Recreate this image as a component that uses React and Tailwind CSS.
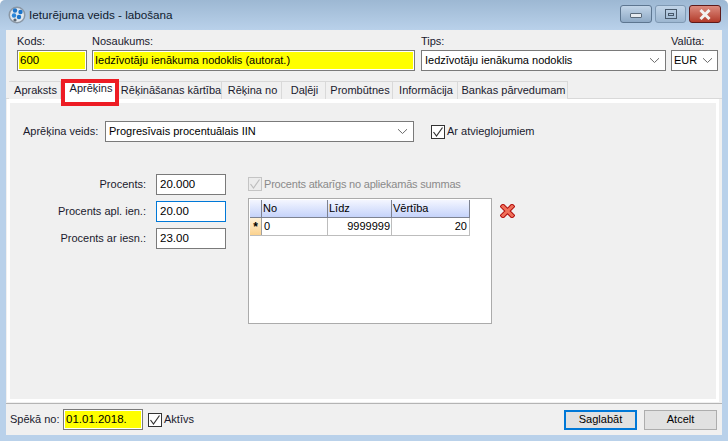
const F = "[font-family:'Liberation_Sans',sans-serif]";

function Chevron() {
  return (
    <svg width="11" height="7" viewBox="0 0 11 7" className="shrink-0">
      <path d="M1 1.2 L5.5 5.5 L10 1.2" fill="none" stroke="#6b6b6b" strokeWidth="1" />
    </svg>
  );
}

function Check({ disabled }) {
  const c = disabled ? "#bdbdbd" : "#333333";
  return (
    <span className={`flex w-[14px] h-[14px] shrink-0 items-center justify-center border ${disabled ? "border-[#c4c4c4] bg-[#ececec]" : "border-[#333333] bg-white"}`}>
      <svg width="12" height="12" viewBox="0 0 12 12">
        <path d="M1.5 6 L4.5 10 L10.5 1.5" fill="none" stroke={c} strokeWidth="1.2" />
      </svg>
    </span>
  );
}

function Input({ value, focus }) {
  return (
    <div className={`w-[70px] h-[21px] shrink-0 bg-white border pl-[3px] text-[11.5px] leading-[19px] text-black ${focus ? "border-[#0078d7]" : "border-[#7a7a7a]"}`}>{value}</div>
  );
}

function PctRow({ label, value, focus }) {
  return (
    <div className="flex items-center justify-end gap-[10px]">
      <span className="text-[11px] text-[#1a1a2e] whitespace-nowrap">{label}</span>
      <Input value={value} focus={focus} />
    </div>
  );
}

function Tab({ children, active, w }) {
  return (
    <div
      className={`flex items-center justify-center shrink-0 whitespace-nowrap border-r border-[#d9d9d9] text-[11px] text-[#1a1a2e] ${active ? "bg-white h-[21px] -mt-[2px] pb-[3px] pl-[3px]" : "bg-[#f0f0f0] h-[18px] border-t pl-[2px]"} ${w}`}
    >
      {children}
    </div>
  );
}

function WinBtn({ w, children, className }) {
  return (
    <div className={`flex h-[18px] ${w} items-center justify-center rounded-[3px] border ${className}`}>{children}</div>
  );
}

function Label({ children }) {
  return <div className="text-[11px] leading-[14px] mt-[4px] mb-[2px] text-[#1a1a2e] whitespace-nowrap">{children}</div>;
}

export default function App() {
  return (
    <div className={`relative w-[728px] h-[441px] overflow-hidden rounded-t-[5px] flex flex-col bg-[#b9d1ea] bg-gradient-to-b from-[#9db8d3] to-[#b9d1ea] to-[30px] text-black ${F}`}>
      {/* title bar */}
      <div className="h-[30px] shrink-0 flex items-center pl-[8px] pr-[8px]">
        <svg width="18" height="18" viewBox="0 0 18 18" className="shrink-0">
          <circle cx="9" cy="9" r="8.5" fill="#8a97a5" />
          <circle cx="9" cy="9" r="7" fill="#dfe7ef" />
          <circle cx="7" cy="4.5" r="2.2" fill="#1c74c9" />
          <circle cx="12.5" cy="6" r="2.2" fill="#1c74c9" />
          <circle cx="6" cy="9.5" r="2.2" fill="#2a85d8" />
          <circle cx="11" cy="11" r="2.2" fill="#1c74c9" />
          <circle cx="7" cy="14" r="1.6" fill="#5a6672" />
        </svg>
        <span className="ml-[3px] text-[11.7px] text-[#10202f] whitespace-nowrap">Ieturējuma veids - labošana</span>
        <div className="ml-auto flex gap-[3px] -mt-[2px] mr-[-1px]">
          <WinBtn w="w-[32px]" className="border-[#5d7690] bg-gradient-to-b from-[#c2d5e8] to-[#8faac6]">
            <span className="w-[12px] h-[5px] bg-[#e6ebf0] border border-[#5a6a7a] rounded-[1px] mt-[3px]" />
          </WinBtn>
          <WinBtn w="w-[31px]" className="border-[#7f99b3] bg-gradient-to-b from-[#c2d5e8] to-[#9db7d1]">
            <span className="w-[12px] h-[10px] border border-[#47586a] flex items-center justify-center">
              <span className="w-[6px] h-[3px] border border-[#47586a]" />
            </span>
          </WinBtn>
          <WinBtn w="w-[32px]" className="border-[#5e1a1a] bg-gradient-to-b from-[#dc8a7e] to-[#b23a2a]">
            <svg width="14" height="11" viewBox="0 0 14 11">
              <path d="M2.5 1 L11.5 10 M11.5 1 L2.5 10" stroke="#f2f2f2" strokeWidth="3" />
            </svg>
          </WinBtn>
        </div>
      </div>

      {/* client area */}
      <div className="mx-[6px] mb-[6px] flex-1 min-h-0 bg-[#f0f0f0] flex flex-col">
        {/* header fields */}
        <div className="flex pl-[11px] pr-[4px] gap-[5px] shrink-0 h-[41px]">
          <div className="w-[70px]">
            <Label>Kods:</Label>
            <div className="h-[21px] border border-[#7a7a7a] bg-white p-[1px]">
              <div className="h-full bg-[#ffff00] pl-[1px] text-[11.5px] leading-[17px]">600</div>
            </div>
          </div>
          <div className="w-[323px]">
            <Label>Nosaukums:</Label>
            <div className="h-[21px] border border-[#7a7a7a] bg-white p-[1px]">
              <div className="h-full bg-[#ffff00] pl-[1px] text-[11px] leading-[17px] whitespace-nowrap">Iedzīvotāju ienākuma nodoklis (autorat.)</div>
            </div>
          </div>
          <div className="w-[245px] ml-[1px]">
            <Label>Tips:</Label>
            <div className="h-[21px] border border-[#7a7a7a] bg-white pl-[3px] pr-[5px] flex items-center justify-between text-[11px]">
              <span className="whitespace-nowrap">Iedzīvotāju ienākuma nodoklis</span>
              <Chevron />
            </div>
          </div>
          <div className="w-[47px]">
            <Label>Valūta:</Label>
            <div className="h-[21px] border border-[#7a7a7a] bg-white pl-[2px] pr-[4px] flex items-center justify-between text-[11px]">
              <span>EUR</span>
              <Chevron />
            </div>
          </div>
        </div>

        {/* tabs */}
        <div className="mt-[10px] h-[18px] shrink-0 flex pl-[3px] border-b border-[#d9d9d9]">
          <Tab w="w-[52px]">Apraksts</Tab>
          <Tab w="w-[58px]" active>Aprēķins</Tab>
          <Tab w="w-[103px]">Rēķināšanas kārtība</Tab>
          <Tab w="w-[60px]">Rēķina no</Tab>
          <Tab w="w-[44px]">Daļēji</Tab>
          <Tab w="w-[67px]">Prombūtnes</Tab>
          <Tab w="w-[65px]">Informācija</Tab>
          <Tab w="w-[110px]">Bankas pārvedumam</Tab>
        </div>

        {/* panel */}
        <div className="flex-1 min-h-0 border-[3px] border-t-[4px] border-white ml-[1px] mr-[3px] mb-[1px] flex flex-col text-[#1a1a2e]">
          <div className="mt-[18px] ml-[13px] flex items-center h-[21px]">
            <span className="w-[82px] text-[11px] whitespace-nowrap">Aprēķina veids:</span>
            <div className="w-[309px] h-[21px] border border-[#7a7a7a] bg-white pl-[3px] pr-[5px] flex items-center justify-between text-[11px] text-black">
              <span className="whitespace-nowrap">Progresīvais procentuālais IIN</span>
              <Chevron />
            </div>
            <span className="ml-[17px]"><Check /></span>
            <span className="ml-[2px] text-[11px] whitespace-nowrap">Ar atvieglojumiem</span>
          </div>

          <div className="mt-[32px] ml-[13px] flex">
            <div className="w-[203px] flex flex-col gap-[6px] shrink-0">
              <PctRow label="Procents:" value="20.000" />
              <PctRow label="Procents apl. ien.:" value="20.00" focus />
              <PctRow label="Procents ar iesn.:" value="23.00" />
            </div>
            <div className="ml-[22px]">
              <div className="flex items-center h-[14px] mt-[3px]">
                <Check disabled />
                <span className="ml-[2px] text-[11px] tracking-[-0.2px] text-[#8a8a8a] whitespace-nowrap">Procents atkarīgs no apliekamās summas</span>
              </div>
              <div className="flex items-start mt-[7px]">
                <div className="w-[244px] h-[126px] border border-[#ababab] bg-white p-[1px] text-[11px]">
                  <div className="flex h-[18px] w-[220px] bg-gradient-to-b from-[#f4f6ff] to-[#c5d3fa] border-b border-[#7d8290]">
                    <div className="w-[12px] border-r border-[#7d8290]" />
                    <div className="w-[66px] border-r border-[#7d8290] pl-[1px] leading-[17px] text-black">No</div>
                    <div className="w-[64px] border-r border-[#7d8290] pl-[1px] leading-[17px] text-black">Līdz</div>
                    <div className="flex-1 border-r border-[#7d8290] pl-[1px] leading-[17px] text-black">Vērtība</div>
                  </div>
                  <div className="flex h-[18px] w-[220px] border-b border-[#bdbdbd] text-black">
                    <div className="w-[12px] bg-gradient-to-b from-[#fff2d8] to-[#fbd28e] border-r border-[#a0a0a0] flex items-center justify-center text-[12px] leading-none font-bold">*</div>
                    <div className="w-[66px] border-r border-[#bdbdbd] pl-[2px] leading-[17px]">0</div>
                    <div className="w-[64px] border-r border-[#bdbdbd] pr-[1px] text-right leading-[17px]">9999999</div>
                    <div className="flex-1 border-r border-[#bdbdbd] pr-[2px] text-right leading-[17px]">20</div>
                  </div>
                </div>
                <svg width="15" height="14" viewBox="0 0 15 14" className="ml-[8px] mt-[6px] shrink-0">
                  <path d="M3 2.5 L12 11.5 M12 2.5 L3 11.5" stroke="#b01010" strokeWidth="5" strokeLinecap="square" />
                  <path d="M3 2.5 L12 11.5 M12 2.5 L3 11.5" stroke="#f0705a" strokeWidth="3" strokeLinecap="square" />
                </svg>
              </div>
            </div>
          </div>
        </div>

        {/* footer */}
        <div className="h-[32px] shrink-0 border-t border-[#b4b4b4] flex items-center pl-[4px] pr-[5px] text-[11px]">
          <span className="w-[53px] text-[#1a1a2e] whitespace-nowrap">Spēkā no:</span>
          <div className="w-[80px] h-[21px] border border-[#7a7a7a] bg-white p-[1px]">
            <div className="h-full bg-[#ffff00] pl-[1px] text-[11.5px] leading-[17px]">01.01.2018.</div>
          </div>
          <span className="ml-[5px]"><Check /></span>
          <span className="ml-[2px] text-[#1a1a2e]">Aktīvs</span>
          <div className="ml-auto flex gap-[7px]">
            <div className="w-[73px] h-[20px] border-2 border-[#0078d7] bg-[#e1e1e1] flex items-center justify-center">Saglabāt</div>
            <div className="w-[73px] h-[20px] border border-[#adadad] bg-[#e1e1e1] flex items-center justify-center">Atcelt</div>
          </div>
        </div>
      </div>

      {/* red annotation over the tab */}
      <div className="absolute left-[61px] top-[79px] w-[58px] h-[27px] border-[4px] border-[#ed1c24]" />
    </div>
  );
}
